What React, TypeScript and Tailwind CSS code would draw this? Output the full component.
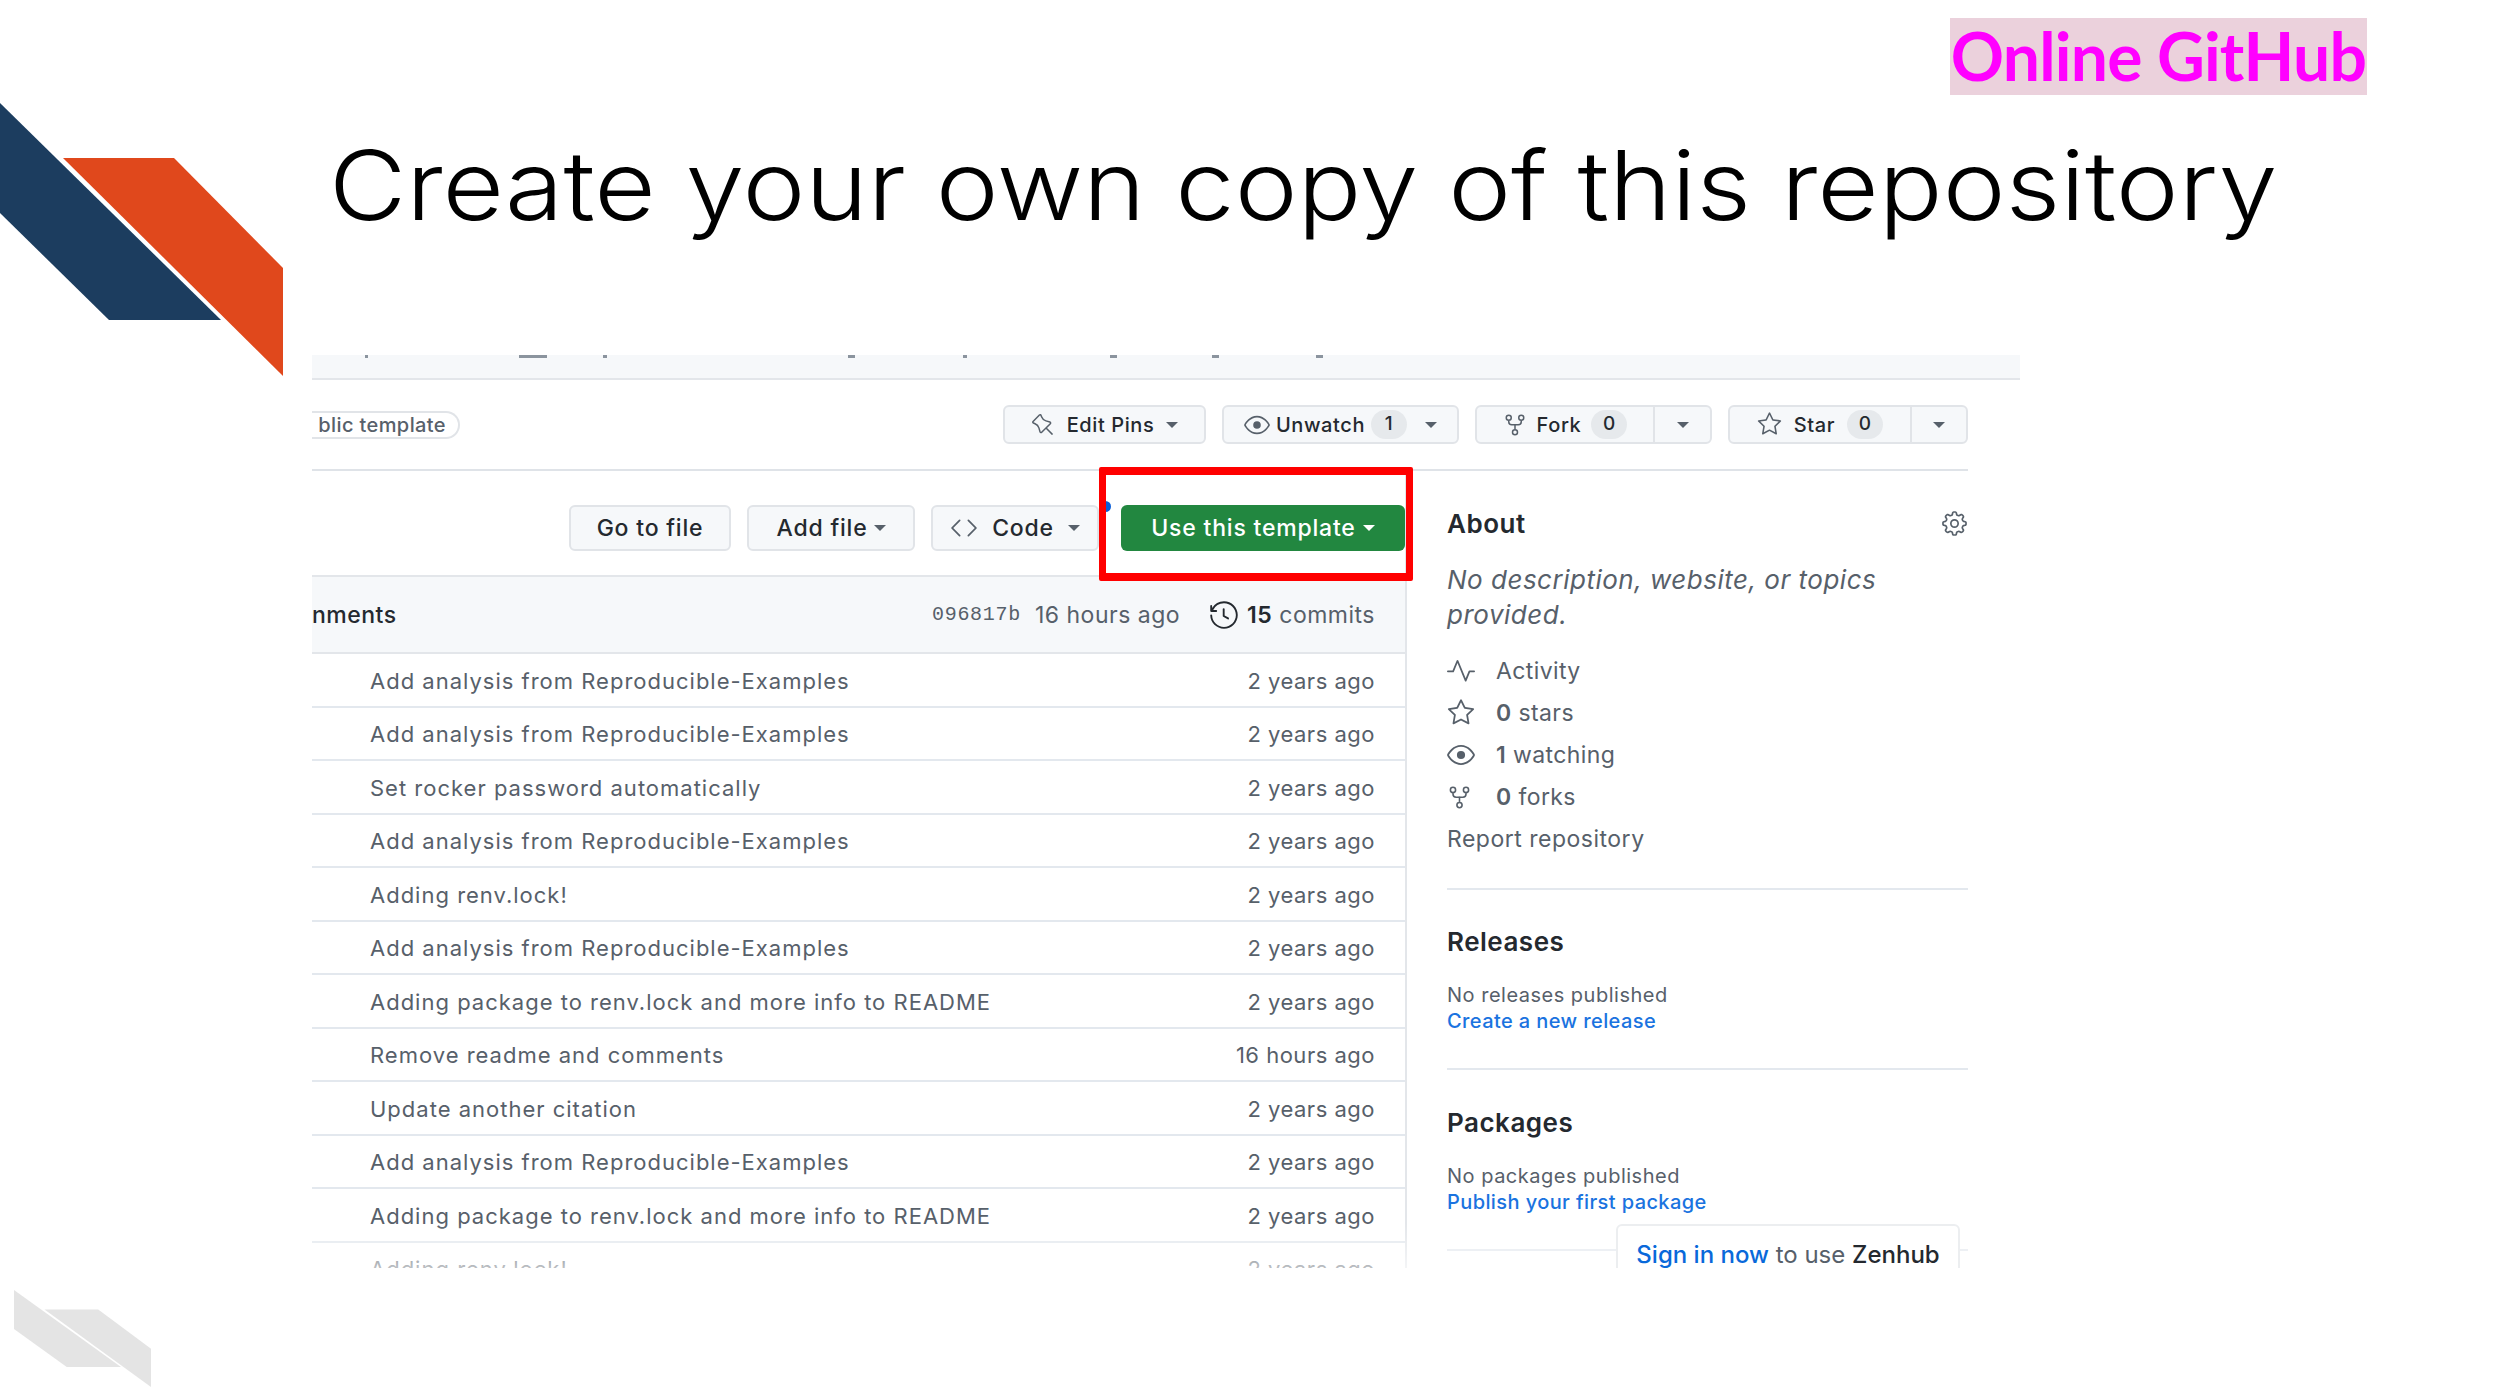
import { GoCode, GoEye, GoGear, GoHistory, GoPin, GoPulse, GoRepoForked, GoStar } from 'react-icons/go';
import type { ReactNode } from 'react';

const ANALYSIS = 'Add analysis from Reproducible-Examples';
const PACKAGE = 'Adding package to renv.lock and more info to README';

const commits = [
  { msg: ANALYSIS, age: '2 years ago' },
  { msg: ANALYSIS, age: '2 years ago' },
  { msg: 'Set rocker password automatically', age: '2 years ago' },
  { msg: ANALYSIS, age: '2 years ago' },
  { msg: 'Adding renv.lock!', age: '2 years ago' },
  { msg: ANALYSIS, age: '2 years ago' },
  { msg: PACKAGE, age: '2 years ago' },
  { msg: 'Remove readme and comments', age: '16 hours ago' },
  { msg: 'Update another citation', age: '2 years ago' },
  { msg: ANALYSIS, age: '2 years ago' },
  { msg: PACKAGE, age: '2 years ago' },
  { msg: 'Adding renv.lock!', age: '2 years ago' },
];

const Caret = ({ className = 'border-t-[#57606a]' }: { className?: string }) => (
  <span className={`inline-block w-0 h-0 border-x-[6px] border-x-transparent border-t-[6px] ${className}`} />
);

const Counter = ({ children }: { children: ReactNode }) => (
  <span className="flex items-center justify-center w-[36px] h-[29px] rounded-full bg-[#e6e9ec] text-[19px] font-medium text-[#24292f]">
    {children}
  </span>
);

// Fork / Star buttons share the split layout
const SplitButton = ({ width, mainWidth, icon, label, count, gap }: { width: string; mainWidth: string; icon: ReactNode; label: string; count: string; gap: string }) => (
  <div className={`flex h-[39px] ${width} rounded-[6px] border-2 border-[#e1e4e8] bg-[#f6f8fa]`}>
    <div className={`flex items-center justify-center ${gap} ${mainWidth} border-r-2 border-[#e1e4e8] text-[20px] font-medium tracking-[0.6px] text-[#24292f]`}>
      {icon}
      <span>{label}</span>
      <Counter>{count}</Counter>
    </div>
    <div className="flex flex-1 items-center justify-center">
      <Caret />
    </div>
  </div>
);

const StatRow = ({ icon, children }: { icon: ReactNode; children: ReactNode }) => (
  <div className="flex items-center h-[42px] text-[23px] tracking-[0.4px] text-[#57606a]">
    <span className="flex w-[49px] items-center text-[#57606a]">{icon}</span>
    <span>{children}</span>
  </div>
);

const Logo = ({ className, navy, orange }: { className: string; navy: string; orange: string }) => (
  <svg className={className} viewBox="0 0 283 273" preserveAspectRatio="none">
    <polygon points="0,0 221,217 109,217 0,110" fill={navy} />
    <polygon points="63,55 174,55 283,165 283,273" fill={orange} />
  </svg>
);

// bottoms of the tab labels that the crop cut off
const tabScraps = [
  [53, 3], [207, 28], [291, 4], [536, 7], [651, 4], [798, 7], [900, 7], [1004, 7],
];

export default function App() {
  return (
    <div className="relative w-[2500px] h-[1388px] overflow-hidden bg-white font-['Inter',sans-serif]">
      <Logo className="absolute left-0 top-[103px] w-[283px] h-[273px]" navy="#1c3d5f" orange="#e0481c" />
      <Logo className="absolute left-[14px] top-[1290px] w-[137px] h-[97px]" navy="#e4e4e4" orange="#e4e4e4" />

      <div className="flex justify-end pt-[18px] pr-[133px]">
        <div className="flex items-center justify-center w-[417px] h-[77px] pb-[2px] bg-[#ebd1dc] font-['Lato',sans-serif] text-[66px] font-bold tracking-[-0.8px] text-[#ff00ff]">
          Online GitHub
        </div>
      </div>

      <div className="flex items-start h-[260px] pl-[329px] pt-[30px]">
        <h1 className="origin-left scale-x-[1.105] text-[96px] leading-[120px] font-light whitespace-nowrap text-black">
          Create your own copy of this repository
        </h1>
      </div>

      {/* pasted github screenshot */}
      <div className="relative w-[1708px] h-[913px] ml-[312px] overflow-hidden">
        <div className="h-[25px] bg-[#f6f8fa] border-b-2 border-[#e3e6ea]">
          <svg className="block w-full h-[3px]" viewBox="0 0 1708 3" preserveAspectRatio="none">
            {tabScraps.map(([x, w]) => (
              <rect key={x} x={x} y={0} width={w} height={3} fill="#8b949e" />
            ))}
          </svg>
        </div>

        <div className="flex items-center justify-between h-[91px] w-[1656px] border-b-2 border-[#dfe3e8]">
          <div className="flex items-center justify-end h-[28px] w-[148px] overflow-hidden rounded-r-full border-2 border-l-0 border-[#e1e4e8] pr-[12px] text-[20px] font-medium tracking-[0.4px] text-[#57606a] whitespace-nowrap">
            blic template
          </div>
          <div className="flex gap-[16px]">
            <div className="flex items-center justify-center gap-[12px] w-[203px] h-[39px] rounded-[6px] border-2 border-[#e1e4e8] bg-[#f6f8fa] text-[20px] font-medium tracking-[0.6px] text-[#24292f]">
              <GoPin size={24} className="text-[#57606a]" />
              <span>Edit Pins</span>
              <Caret />
            </div>
            <div className="flex items-center justify-center gap-[6px] w-[237px] h-[39px] rounded-[6px] border-2 border-[#e1e4e8] bg-[#f6f8fa] text-[20px] font-medium tracking-[0.6px] text-[#24292f]">
              <GoEye size={26} className="text-[#57606a]" />
              <span>Unwatch</span>
              <Counter>1</Counter>
              <span className="w-[6px]" />
              <Caret />
            </div>
            <SplitButton width="w-[237px]" mainWidth="w-[178px]" gap="gap-[10px]" icon={<GoRepoForked size={24} className="text-[#57606a]" />} label="Fork" count="0" />
            <SplitButton width="w-[240px]" mainWidth="w-[182px]" gap="gap-[12px]" icon={<GoStar size={25} className="text-[#57606a]" />} label="Star" count="0" />
          </div>
        </div>

        <div className="flex">
          <div className="w-[1095px] border-r-2 border-[#e3e6ea]">
            <div className="flex justify-end gap-[16px] h-[106px] pt-[34px] border-b-2 border-[#e3e6ea]">
              <div className="flex items-center justify-center w-[162px] h-[46px] rounded-[6px] border-2 border-[#e1e4e8] bg-[#f6f8fa] text-[23px] font-medium tracking-[0.8px] text-[#24292f]">
                Go to file
              </div>
              <div className="flex items-center justify-center gap-[6px] w-[168px] h-[46px] rounded-[6px] border-2 border-[#e1e4e8] bg-[#f6f8fa] text-[23px] font-medium tracking-[0.8px] text-[#24292f]">
                <span>Add file</span>
                <Caret />
              </div>
              <div className="flex items-center justify-center gap-[14px] w-[168px] h-[46px] mr-[6px] rounded-[6px] border-2 border-[#e1e4e8] bg-[#f6f8fa] text-[23px] font-medium tracking-[0.8px] text-[#24292f]">
                <GoCode size={28} className="text-[#57606a]" />
                <span>Code</span>
                <Caret />
              </div>
              <div className="flex items-center justify-center gap-[7px] w-[284px] h-[46px] rounded-[6px] bg-[#228740] text-[23px] font-medium tracking-[0.8px] text-white">
                <span>Use this template</span>
                <Caret className="border-t-white" />
              </div>
            </div>

            <div className="flex items-center justify-between h-[77px] pt-[1px] pr-[30px] bg-[#f6f8fa] border-b-2 border-[#e3e6ea] text-[23px] tracking-[0.5px] text-[#57606a]">
              <span className="font-medium text-[#24292f]">nments</span>
              <div className="flex items-center">
                <span className="font-['Liberation_Mono',monospace] text-[20px] tracking-[0.7px]">096817b</span>
                <span className="ml-[14px]">16 hours ago</span>
                <GoHistory size={30} className="ml-[29px] text-[#24292f]" />
                <span className="ml-[8px]"><b className="font-semibold text-[#24292f]">15</b> commits</span>
              </div>
            </div>

            {commits.map((c, i) => (
              <div key={i} className="flex items-center justify-between h-[53.5px] pt-[3px] pl-[58px] pr-[30px] border-b-2 border-[#e3e8ee] text-[22px] text-[#57606a]">
                <span className="tracking-[1px]">{c.msg}</span>
                <span className="tracking-[0.5px]">{c.age}</span>
              </div>
            ))}
          </div>

          <div className="w-[521px] ml-[40px]">
            <div className="flex items-center justify-between h-[30px] mt-[37px]">
              <h2 className="text-[26px] font-semibold tracking-[0.5px] text-[#24292f]">About</h2>
              <GoGear size={27} className="text-[#57606a]" />
            </div>
            <p className="mt-[24px] text-[26px] leading-[35px] italic tracking-[0.5px] text-[#57606a]">
              No description, website, or topics provided.
            </p>
            <div className="mt-[18px]">
              <StatRow icon={<GoPulse size={28} />}>Activity</StatRow>
              <StatRow icon={<GoStar size={28} />}><b className="font-semibold">0</b> stars</StatRow>
              <StatRow icon={<GoEye size={28} />}><b className="font-semibold">1</b> watching</StatRow>
              <StatRow icon={<GoRepoForked size={25} />}><b className="font-semibold">0</b> forks</StatRow>
              <div className="flex items-center h-[42px] text-[23px] tracking-[0.5px] text-[#57606a]">Report repository</div>
            </div>
            <div className="mt-[28px] border-t-2 border-[#e3e8ee]" />
            <h2 className="mt-[37px] text-[26px] leading-[30px] font-semibold tracking-[0.5px] text-[#24292f]">Releases</h2>
            <p className="mt-[25px] text-[20px] leading-[26px] tracking-[0.5px] text-[#57606a]">No releases published</p>
            <p className="text-[20px] leading-[26px] font-medium tracking-[0.4px] text-[#1a73e0]">Create a new release</p>
            <div className="mt-[34px] border-t-2 border-[#e3e8ee]" />
            <h2 className="mt-[38px] text-[26px] leading-[30px] font-semibold tracking-[0.5px] text-[#24292f]">Packages</h2>
            <p className="mt-[25px] text-[20px] leading-[26px] tracking-[0.5px] text-[#57606a]">No packages published</p>
            <p className="text-[20px] leading-[26px] font-medium tracking-[0.4px] text-[#1a73e0]">Publish your first package</p>
            <div className="mt-[34px] border-t-2 border-[#e3e8ee]" />
          </div>
        </div>

        <div className="absolute inset-x-0 bottom-0 h-[45px] bg-gradient-to-b from-transparent to-white/60" />

        {/* Zenhub prompt peeking in from the bottom */}
        <div className="absolute left-[1304px] top-[869px] w-[344px] h-[60px] pt-[16px] rounded-t-[6px] border-2 border-[#eceef0] bg-white text-center text-[24px] leading-[26px] whitespace-nowrap text-[#57606a]">
          <span className="font-medium text-[#0969da]">Sign in now</span> to use <span className="font-medium text-[#24292f]">Zenhub</span>
        </div>
      </div>

      {/* red highlight + stray cursor dot */}
      <div className="absolute left-[1100px] top-[501px] w-[11px] h-[11px] rounded-full bg-[#0b5fd8]" />
      <div className="absolute left-[1099px] top-[467px] w-[314px] h-[114px] border-x-[7px] border-y-[8px] border-[#ff0000] rounded-[2px]" />
    </div>
  );
}
